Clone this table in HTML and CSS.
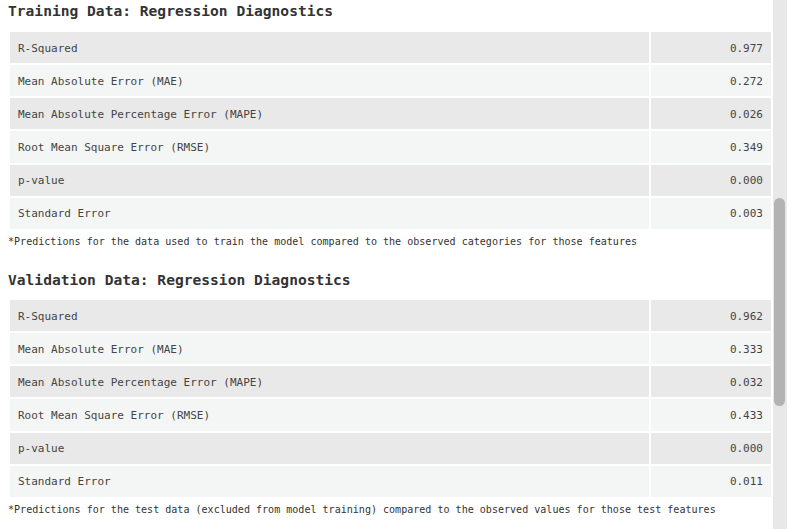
FILE: index.html
```html
<!DOCTYPE html>
<html>
<head>
<meta charset="utf-8">
<link rel="stylesheet" href="styles.css">
</head>
<body>
<div class="page">
  <main class="content">
    <h2 class="title">Training Data: Regression Diagnostics</h2>
    <table class="diag first">
      <colgroup><col class="c-label"><col class="c-value"></colgroup>
      <tr><td>R-Squared</td><td class="val">0.977</td></tr>
      <tr><td>Mean Absolute Error (MAE)</td><td class="val">0.272</td></tr>
      <tr><td>Mean Absolute Percentage Error (MAPE)</td><td class="val">0.026</td></tr>
      <tr><td>Root Mean Square Error (RMSE)</td><td class="val">0.349</td></tr>
      <tr><td>p-value</td><td class="val">0.000</td></tr>
      <tr><td>Standard Error</td><td class="val">0.003</td></tr>
    </table>
    <p class="note">*Predictions for the data used to train the model compared to the observed categories for those features</p>

    <h2 class="title second">Validation Data: Regression Diagnostics</h2>
    <table class="diag">
      <colgroup><col class="c-label"><col class="c-value"></colgroup>
      <tr><td>R-Squared</td><td class="val">0.962</td></tr>
      <tr><td>Mean Absolute Error (MAE)</td><td class="val">0.333</td></tr>
      <tr><td>Mean Absolute Percentage Error (MAPE)</td><td class="val">0.032</td></tr>
      <tr><td>Root Mean Square Error (RMSE)</td><td class="val">0.433</td></tr>
      <tr><td>p-value</td><td class="val">0.000</td></tr>
      <tr><td>Standard Error</td><td class="val">0.011</td></tr>
    </table>
    <p class="note">*Predictions for the test data (excluded from model training) compared to the observed values for those test features</p>
  </main>
  <div class="scrollbar"><div class="thumb"></div></div>
</div>
</body>
</html>
```

FILE: styles.css
```css
html, body {
  margin: 0;
  padding: 0;
  background: #ffffff;
}
.page {
  display: flex;
  height: 529px;
  overflow: hidden;
  font-family: "DejaVu Sans Mono", "Liberation Mono", monospace;
  color: #333333;
}
.content {
  width: 765px;
  padding-left: 8px;
  flex: none;
}
.title {
  margin: 0;
  font-size: 14.6px;
  font-weight: bold;
  line-height: 22px;
  height: 22px;
  color: #333333;
  white-space: nowrap;
}
.title.second {
  margin-top: 20px;
}
.diag {
  border-collapse: separate;
  border-spacing: 2px;
  width: 765px;
  table-layout: fixed;
  margin-top: 7px;
  font-size: 11px;
}
.diag.first {
  margin-top: 8px;
}
.c-label { width: 639px; }
.c-value { width: 120px; }
.diag td {
  height: 31.17px;
  padding: 1px 8px 0 8px;
  box-sizing: border-box;
  color: #444444;
  white-space: nowrap;
}
.diag tr:nth-child(odd) td { background: #e9e9e9; }
.diag tr:nth-child(even) td { background: #f4f6f5; }
.diag td.val { text-align: right; }
.note {
  margin: 4px 0 0 0;
  font-size: 10.05px;
  line-height: 14px;
  color: #333333;
  white-space: nowrap;
}
.scrollbar {
  width: 14px;
  flex: none;
  background: #e8e8e8;
  height: 529px;
}
.thumb {
  margin: 198px 0 0 1px;
  width: 11px;
  height: 208px;
  border-radius: 6px;
  background: #b3b3b3;
}
```
